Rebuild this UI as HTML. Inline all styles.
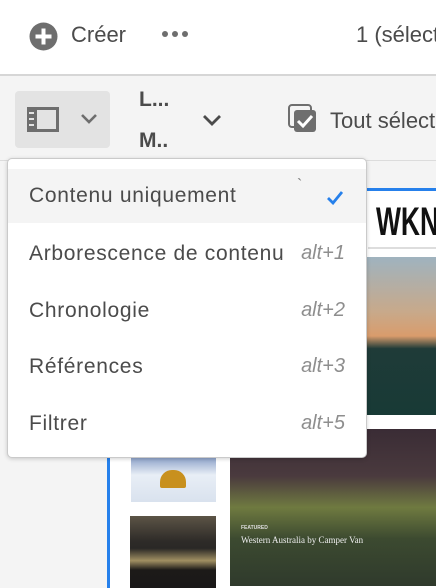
<!DOCTYPE html>
<html><head><meta charset="utf-8"><style>
*{margin:0;padding:0;box-sizing:border-box}
html,body{width:436px;height:588px;overflow:hidden}
body{position:relative;background:#f4f4f4;font-family:"Liberation Sans",sans-serif;color:#4b4b4b}
.hdr{position:absolute;left:0;top:0;width:436px;height:76px;background:#fff;border-bottom:2px solid #d6d6d6;overflow:hidden}
.tb{position:absolute;left:0;top:78px;width:436px;height:83px;background:#f4f4f4;border-bottom:1px solid #dcdcdc;overflow:hidden}
.abs{position:absolute}
.menu{position:absolute;left:7px;top:158px;width:360px;height:300px;background:#fff;border:1px solid #cacaca;border-radius:5px;box-shadow:0 1px 4px rgba(0,0,0,.18);overflow:hidden}
.it{position:absolute;left:0;width:100%;height:57px;font-size:21px;letter-spacing:0.7px;line-height:57px;padding-left:21px;color:#4b4b4b;white-space:nowrap}
.it .k{position:absolute;right:21px;top:0;font-style:italic;color:#8e8e8e;letter-spacing:0;font-size:20px}
</style></head><body>
<div class="hdr">
 <svg class="abs" style="left:29px;top:22px" width="29" height="29" viewBox="0 0 29 29"><circle cx="14.5" cy="14.5" r="14" fill="#6e6e6e"/><rect x="12.5" y="6.5" width="4" height="16" fill="#fff"/><rect x="6.5" y="12.5" width="16" height="4" fill="#fff"/></svg>
 <div class="abs" style="left:71px;top:22px;font-size:22px;color:#4b4b4b">Créer</div>
 <div class="abs" style="left:160px;top:30px;width:30px;height:8px">
  <span class="abs" style="left:2px;top:1px;width:6px;height:6px;border-radius:50%;background:#6e6e6e"></span>
  <span class="abs" style="left:12px;top:1px;width:6px;height:6px;border-radius:50%;background:#6e6e6e"></span>
  <span class="abs" style="left:22px;top:1px;width:6px;height:6px;border-radius:50%;background:#6e6e6e"></span>
 </div>
 <div class="abs" style="left:356px;top:22px;width:80px;overflow:hidden;font-size:22px;white-space:nowrap">1 (sélection)</div>
</div>
<div class="tb">
 <div class="abs" style="left:15px;top:13px;width:95px;height:57px;background:#e3e3e3;border-radius:4px"></div>
 <svg class="abs" style="left:27px;top:29px" width="32" height="25" viewBox="0 0 32 25"><rect x="0" y="0" width="32" height="25" fill="#6e6e6e"/><rect x="10" y="3" width="19" height="19" fill="#e3e3e3"/><rect x="2" y="5" width="5" height="2" fill="#e3e3e3"/><rect x="2" y="11" width="5" height="2" fill="#e3e3e3"/><rect x="2" y="17" width="5" height="2" fill="#e3e3e3"/></svg>
 <svg class="abs" style="left:80px;top:35px" width="18" height="11" viewBox="0 0 18 11"><path d="M2 2 L9 9 L16 2" stroke="#6e6e6e" stroke-width="2.6" fill="none"/></svg>
 <div class="abs" style="left:139px;top:10px;font-size:21px;font-weight:bold;color:#4b4b4b">L...</div>
 <div class="abs" style="left:139px;top:51px;font-size:21px;font-weight:bold;color:#4b4b4b">M..</div>
 <svg class="abs" style="left:202px;top:36px" width="20" height="12" viewBox="0 0 20 12"><path d="M2 2 L10 10 L18 2" stroke="#4b4b4b" stroke-width="2.8" fill="none"/></svg>
 <svg class="abs" style="left:288px;top:26px" width="30" height="30" viewBox="0 0 30 30"><rect x="1" y="1" width="22" height="22" rx="3" fill="none" stroke="#6e6e6e" stroke-width="2"/><rect x="6" y="6" width="22" height="22" rx="3" fill="#6e6e6e"/><path d="M10 17 L15 22 L24 12" stroke="#fff" stroke-width="3" fill="none"/></svg>
 <div class="abs" style="left:330px;top:30px;width:106px;overflow:hidden;font-size:22px;white-space:nowrap">Tout sélectionner</div>
</div>
<div class="abs" style="left:107px;top:188px;width:329px;height:400px;background:#fff;border-left:3px solid #2680eb;border-top:3px solid #2680eb"></div>
<div class="abs" style="left:368px;top:196px;width:68px;height:53px;background:#fff;border-bottom:2px solid #ddd;overflow:hidden">
 <div class="abs" style="left:8px;top:6px;font-size:40px;font-weight:bold;color:#111;line-height:40px;white-space:nowrap;transform:scaleX(0.66);transform-origin:left top">WKND</div>
</div>
<div class="abs" style="left:230px;top:257px;width:206px;height:158px;background:linear-gradient(180deg,#9fb3bf 0%,#c8a98a 35%,#d99c6c 50%,#1f3b38 58%,#183a36 100%)"></div>
<div class="abs" style="left:230px;top:429px;width:206px;height:157px;background:linear-gradient(180deg,#3a2c35 0%,#4a3a3e 30%,#6f7a40 50%,#3c4a30 70%,#2f3a2c 100%)"></div>
<div class="abs" style="left:241px;top:525px;font-size:5px;color:#ddd;font-weight:bold">FEATURED</div>
<div class="abs" style="left:241px;top:535px;font-size:9px;color:#eee;font-family:'Liberation Serif',serif">Western Australia by Camper Van</div>
<div class="abs" style="left:131px;top:457px;width:85px;height:45px;background:linear-gradient(180deg,#8aa0c8 0%,#e8eef6 40%,#d9e2ee 100%)"></div>
<div class="abs" style="left:160px;top:470px;width:26px;height:18px;background:#c8901e;border-radius:12px 12px 2px 2px"></div>
<div class="abs" style="left:130px;top:516px;width:86px;height:72px;background:linear-gradient(180deg,#5c5446 0%,#2e2b28 35%,#2a2826 45%,#a08f62 62%,#1c1a18 75%,#1a1818 100%)"></div>
<div class="menu">
 <div class="it" style="top:10px;background:#f4f4f4;height:54px;line-height:54px">Contenu uniquement<span class="abs" style="left:289px;top:-10px;color:#777;font-size:16px">`</span>
  <svg class="abs" style="right:22px;top:21px" width="18" height="15" viewBox="0 0 18 15"><path d="M2 8 L7 13 L16 2" stroke="#2680eb" stroke-width="2.8" fill="none"/></svg></div>
 <div class="it" style="top:66px">Arborescence de contenu<span class="k">alt+1</span></div>
 <div class="it" style="top:123px">Chronologie<span class="k">alt+2</span></div>
 <div class="it" style="top:179px">Références<span class="k">alt+3</span></div>
 <div class="it" style="top:236px">Filtrer<span class="k">alt+5</span></div>
</div>
</body></html>
